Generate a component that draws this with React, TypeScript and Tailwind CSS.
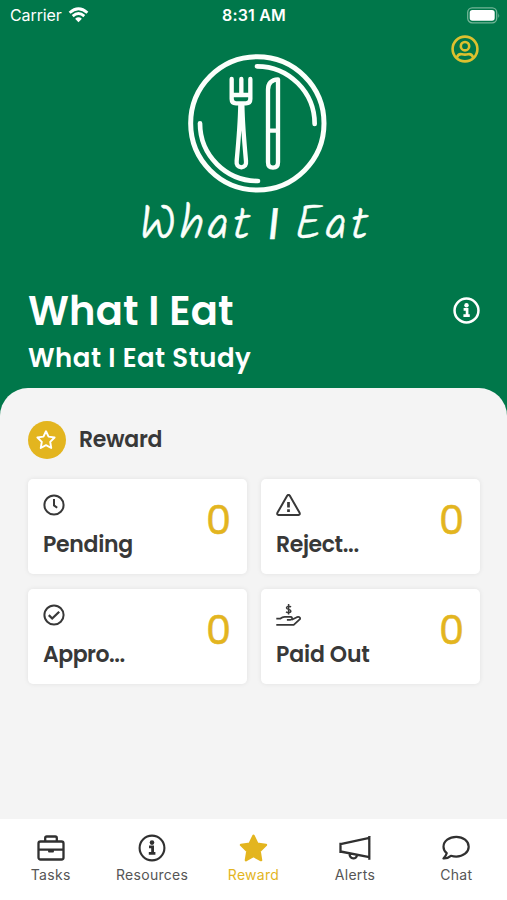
import type { ReactNode } from 'react';

const label = "font-['Poppins','Inter',sans-serif]";

function Info({ className, stroke = 2.6 }: { className: string; stroke?: number }) {
  return (
    <svg viewBox="0 0 28 28" className={className} fill="none" stroke="currentColor">
      <circle cx="14" cy="14" r="12.4" strokeWidth={stroke} />
      <circle cx="14" cy="8.6" r="2.3" fill="currentColor" stroke="none" />
      <path d="M11 12.9H14.6V19.2M10.8 19.3H17.4" strokeWidth="2.8" />
    </svg>
  );
}

function PlateLogo() {
  return (
    <svg viewBox="0 0 465 465" className="h-[155px] w-[155px]" fill="none" stroke="currentColor" strokeWidth="13" strokeLinecap="round" strokeLinejoin="round">
      <circle cx="232" cy="235" r="200" strokeWidth="15" />
      <path d="M231 64A173 173 0 0 1 404 237M60 235A173 173 0 0 0 234 408" strokeWidth="14" />
      <path d="M155 102V162Q155 175 168 175H198Q211 175 211 162V102M184 102V149M158 150H208" strokeWidth="13" />
      <path d="M181 181Q180 240 170 348Q168 366 184 367Q200 366 198 348Q188 240 187 181" strokeWidth="13" />
      <path d="M294 103V352Q294 368 279 368Q264 368 264 352V134Q264 105 294 103ZM264 257H294" strokeWidth="13" />
    </svg>
  );
}

function StarShape({ className, filled }: { className: string; filled?: boolean }) {
  return (
    <svg viewBox="0 0 28 28" className={className} fill={filled ? 'currentColor' : 'none'} stroke="currentColor" strokeWidth={filled ? 2.4 : 2.7} strokeLinejoin="round">
      <path d="M14 1.8L17.6 9.3L26 10.5L19.9 16.6L21.3 25.2L14 21.2L6.7 25.2L8.1 16.6L2 10.5L10.4 9.3Z" />
    </svg>
  );
}

function Card({ icon, title, spacing }: { icon: ReactNode; title: string; spacing: string }) {
  return (
    <div className="flex h-[95px] justify-between rounded-[5px] bg-white pr-[16px] pl-[15px] shadow-[0_0_5px_rgba(0,0,0,0.08)]">
      <div className="pt-[15px]">
        <div className="flex h-[22px] items-center">{icon}</div>
        <div className={`${label} ${spacing} mt-[12px] text-[22px] leading-[34px] font-semibold whitespace-nowrap`}>{title}</div>
      </div>
      <div className="pt-[17px] font-['Poppins','Open_Sans',sans-serif] text-[40px] leading-[48px] font-normal text-[#e3b51f] [-webkit-text-stroke:0.5px_#e3b51f]">0</div>
    </div>
  );
}

function Tab({ icon, text, active }: { icon: ReactNode; text: string; active?: boolean }) {
  return (
    <div className={`flex flex-1 flex-col items-center pt-[14px] ${active ? 'text-[#e3b51f]' : 'text-[#303030]'}`}>
      <div className="flex h-[30px] items-center">{icon}</div>
      <div className={`mt-[2px] text-[14px] leading-[20px] tracking-[0.3px] ${active ? '' : 'text-[#555]'}`}>{text}</div>
    </div>
  );
}

export default function App() {
  return (
    <div className="flex h-[900px] w-[507px] flex-col overflow-hidden bg-[#00774a] font-['Inter',sans-serif] text-[#383838]">
      <div className="grid h-[30px] shrink-0 grid-cols-3 items-center pr-[7px] pl-[10px] text-white">
        <div className="flex items-center gap-[6px] text-[16px] tracking-[-0.1px]">
          Carrier
          <svg viewBox="0 0 20 16" className="h-[16px] w-[21px]" fill="none" stroke="currentColor" strokeWidth="2.8">
            <path d="M1.1 5.8Q10-2.2 18.9 5.8M4.2 9.1Q10 4 15.8 9.1" />
            <path d="M6.6 11.7Q10 8.8 13.4 11.7L10 15.2Z" fill="currentColor" stroke="none" />
          </svg>
        </div>
        <div className="pr-[2px] text-center text-[16px] font-semibold tracking-[0.15px] whitespace-nowrap">8:31 AM</div>
        <svg viewBox="0 0 34 17" className="h-[17px] w-[34px] justify-self-end" fill="none">
          <rect x="1.7" y=".8" width="29" height="15" rx="4.5" stroke="#72b597" strokeWidth="1.3" />
          <rect x="3.7" y="2.9" width="25" height="10.8" rx="2.7" fill="white" />
          <path d="M32.3 6V11Q34 8.5 32.3 6Z" fill="#72b597" />
        </svg>
      </div>

      <div className="grid h-[215px] shrink-0 grid-cols-[1fr_260px_1fr] text-[#fbfffb]">
        <div />
        <div className="flex flex-col items-center pt-[15px]">
          <div className="ml-[8px]"><PlateLogo /></div>
          <div className="-mt-[1px] ml-[4px] flex items-baseline gap-[14px] font-['Bradley_Hand','Segoe_Print','Kalam','Caveat','Patrick_Hand','Architects_Daughter','Indie_Flower','Dancing_Script','Comic_Neue','Lato'] text-[47px] leading-[48px] font-light tracking-[4px] whitespace-nowrap [-webkit-text-stroke:0.5px_#fbfffb]">
            <span>What</span>
            <span className="-skew-x-6 font-['Lato'] text-[43px] font-normal tracking-normal">I</span>
            <span>Eat</span>
          </div>
        </div>
        <svg viewBox="0 0 28 28" className="mt-[5px] mr-[28px] h-[28px] w-[28px] justify-self-end text-[#dcc12f]" fill="none" stroke="currentColor" strokeWidth="2.6">
          <circle cx="14" cy="14" r="12.4" />
          <circle cx="14" cy="11.2" r="4.2" />
          <path d="M5.8 22.8C6.7 19.3 9 18.8 11 19.2Q14 20 17 19.2C19 18.8 21.3 19.3 22.2 22.8" />
        </svg>
      </div>

      <header className={`${label} flex h-[143px] shrink-0 justify-between pr-[27px] pl-[28px] text-white`}>
        <div className="pt-[39px]">
          <h1 className="text-[40px] leading-[54px] font-semibold tracking-[0.15px]">What I Eat</h1>
          <h2 className="mt-[3px] text-[26px] leading-[34px] font-semibold tracking-[0.5px]">What I Eat Study</h2>
        </div>
        <Info className="mt-[52px] h-[27px] w-[27px]" />
      </header>

      <main className="h-[431px] shrink-0 rounded-t-[28px] bg-[#f4f4f4] pt-[33px] pr-[27px] pl-[28px]">
        <div className="flex h-[38px] items-center gap-[13px]">
          <div className="flex h-[38px] w-[38px] items-center justify-center rounded-full bg-[#e3b51f] pr-[2px] text-white">
            <StarShape className="h-[20px] w-[20px]" />
          </div>
          <div className={`${label} pb-[2px] text-[22px] font-semibold tracking-[-0.3px]`}>Reward</div>
        </div>
        <div className="mt-[20px] grid grid-cols-2 gap-x-[14px] gap-y-[15px] text-[#383838]">
          <Card title="Pending" spacing="tracking-[-0.3px]" icon={
            <svg viewBox="0 0 22 22" className="h-[22px] w-[22px]" fill="none" stroke="currentColor" strokeWidth="2">
              <circle cx="11" cy="11" r="9.6" /><path d="M11 5V11.4L14.2 13.8" />
            </svg>
          } />
          <Card title="Reject..." spacing="tracking-[-0.4px]" icon={
            <svg viewBox="0 0 25 22" className="h-[22px] w-[25px]" fill="none" stroke="currentColor" strokeWidth="2" strokeLinejoin="round">
              <path d="M11.3 1.6Q12.5 .2 13.7 1.6L23.6 18.8Q24.3 20.8 22.5 21H2.5Q.7 20.8 1.4 18.8Z" />
              <path d="M12.5 8V13.5M12.5 15.3V18" strokeWidth="2.7" />
            </svg>
          } />
          <Card title="Appro..." spacing="tracking-[-0.5px]" icon={
            <svg viewBox="0 0 22 22" className="h-[22px] w-[22px]" fill="none" stroke="currentColor" strokeWidth="2">
              <circle cx="11" cy="11" r="9.6" /><path d="M5.8 11.2L9.2 14.5L16.2 7.7" strokeWidth="2.3" />
            </svg>
          } />
          <Card title="Paid Out" spacing="tracking-[-0.15px]" icon={
            <svg viewBox="0 0 25 22" className="h-[22px] w-[25px]" fill="none" stroke="currentColor" strokeWidth="1.8" strokeLinejoin="round">
              <path d="M15.1 2.9C12.8 1.6 10.3 2.4 10.5 4C10.8 5.8 15 5 14.9 7.1C14.8 8.8 12 9 10 7.8M12.6 0V10.5" strokeWidth="1.5" />
              <path d="M.3 14.7H4.1Q6.4 12.9 8.7 12.9H14.7Q16.4 13.2 15.9 14.8Q15.5 15.9 14.2 15.9H10.9M15.7 15.8L20.9 13.2C23.5 12.2 25.1 14.2 23.4 15.7L17.7 20.9H.3" />
            </svg>
          } />
        </div>
      </main>

      <nav className="flex h-[81px] shrink-0 bg-white">
        <Tab text="Tasks" icon={
          <svg viewBox="0 0 28 26" className="h-[26px] w-[28px]" fill="none" stroke="currentColor" strokeWidth="2.3" strokeLinejoin="round">
            <rect x="1.5" y="6.5" width="25" height="18" rx="2" />
            <path d="M8.2 6V3Q8.2 1.5 9.7 1.5H18.3Q19.8 1.5 19.8 3V6M1.5 14.6H26.5" />
            <path d="M11.1 15H16.9V16.7Q16.9 17.5 16.1 17.5H11.9Q11.1 17.5 11.1 16.7Z" fill="currentColor" stroke="none" />
          </svg>
        } />
        <Tab text="Resources" icon={<Info className="h-[28px] w-[28px]" stroke={2.1} />} />
        <Tab text="Reward" active icon={<StarShape className="h-[29px] w-[29px]" filled />} />
        <Tab text="Alerts" icon={
          <svg viewBox="0 0 32 26" className="h-[26px] w-[32px]" fill="none" stroke="currentColor" strokeWidth="2.3">
            <path d="M1.5 7.7V18M1.5 9.2L30.3 3V22.2L1.5 16.5M30.3 1V24.8M10.5 18.8C10.8 24.9 17.7 24.6 18 20.2" />
          </svg>
        } />
        <Tab text="Chat" icon={
          <svg viewBox="0 0 28 26" className="h-[26px] w-[28px]" fill="none" stroke="currentColor" strokeWidth="2.2" strokeLinejoin="round">
            <path d="M14.3 1.9C7.2 1.9 1.5 6.2 1.5 11.7C1.5 14.2 2.7 16.5 4.7 18.2C4.2 20.2 3.1 21.8 1.5 23.5C4.5 23.7 7 22.4 8.9 20.8C10.6 21.3 12.4 21.6 14.3 21.6C21.2 21.6 26.7 17.2 26.7 11.7C26.7 6.2 21.2 1.9 14.3 1.9Z" />
          </svg>
        } />
      </nav>
    </div>
  );
}
